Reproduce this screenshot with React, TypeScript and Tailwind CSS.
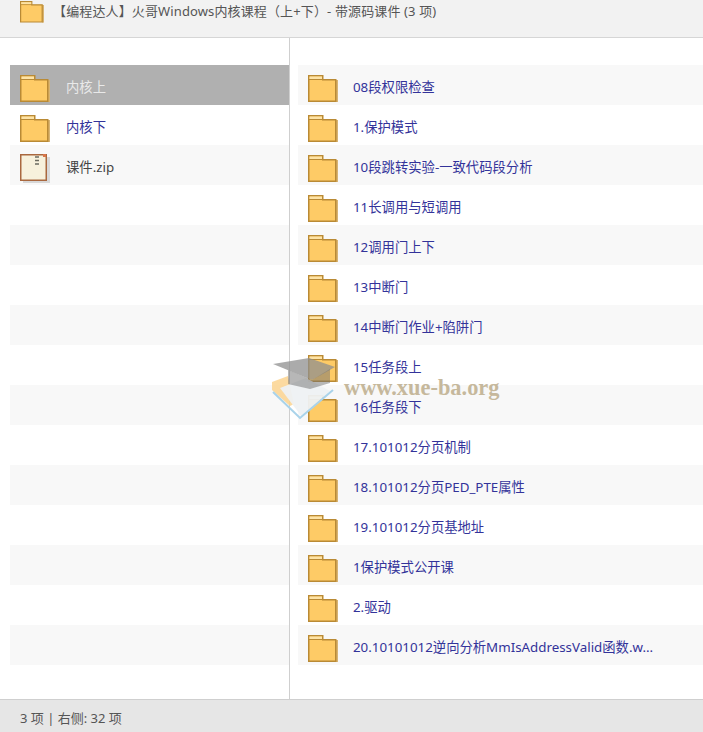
const leftRows = [
  { name: "内核上", kind: "folder" },
  { name: "内核下", kind: "folder" },
  { name: "课件.zip", kind: "zip" },
];

const rightRows = [
  "08段权限检查",
  "1.保护模式",
  "10段跳转实验-一致代码段分析",
  "11长调用与短调用",
  "12调用门上下",
  "13中断门",
  "14中断门作业+陷阱门",
  "15任务段上",
  "16任务段下",
  "17.101012分页机制",
  "18.101012分页PED_PTE属性",
  "19.101012分页基地址",
  "1保护模式公开课",
  "2.驱动",
  "20.10101012逆向分析MmIsAddressValid函数.w...",
];

function FolderIcon({ size = 30 }: { size?: number }) {
  return (
    <svg width={size} height={(size * 27) / 30} viewBox="0 0 30 27" className="flex-none">
      <rect x="27.500" y="5" width="2.500" height="22" fill="#d8b473" />
      <path d="M.75 26.250V.75h14v4h13v21.500z" fill="#fecb66" stroke="#b98a35" strokeWidth="1.500" />
      <path d="M1.500 1.500h12.500v2.500H1.500z" fill="#fde3a6" />
      <path d="M1 4.500h14" stroke="#b98a35" />
    </svg>
  );
}

function ZipIcon() {
  return (
    <svg width="30" height="29" viewBox="0 0 30 29" className="flex-none">
      <rect x="3" y="3" width="27" height="26" fill="#d8d8d8" />
      <rect x=".75" y=".75" width="25.500" height="25.500" fill="#f7f1dc" stroke="#a9683f" strokeWidth="1.500" />
      <path d="M15 3h4M15 6.500h4M15 10h4" stroke="#6b6b60" strokeWidth="1.500" />
      <rect x="23" y="0" width="3" height="3" fill="#d9764a" />
    </svg>
  );
}

function Watermark() {
  return (
    <div className="pointer-events-none absolute left-[272px] top-[358px] flex items-start">
      <svg width="72" height="62" viewBox="0 0 72 62" className="flex-none">
        <path d="M0 24l16-6 6 28-4 2L0 32z" fill="#fbd48f" opacity=".85" />
        <path d="M8 30l26-10 24 13-28 26z" fill="#eef1f3" opacity=".95" />
        <path d="M1 34l27 26 33-28" fill="none" stroke="#a9d3ea" strokeWidth="2" />
        <path d="M1 6L37 0l26 9-23 13z" fill="#8f8f8f" opacity=".75" />
        <path d="M16 12v14l22 5 20-6 0-14-18 11z" fill="#6f6f6f" opacity=".5" />
      </svg>
      <span className="-ml-0 mt-[18px] font-['Liberation_Serif',serif] text-[22.4px] font-bold leading-[24px] text-[#c6b89c]">
        www.xue-ba.org
      </span>
    </div>
  );
}

export default function App() {
  return (
    <div className="relative flex h-[732px] w-[703px] flex-col overflow-hidden bg-white font-['Noto_Sans','Noto_Sans_CJK_SC',sans-serif] text-[13.33px]">
      <header className="flex h-[38px] flex-none items-start gap-[9px] border-b border-[#d6d6d6] bg-[#f2f2f2] pl-[20px] pt-[1px]">
        <FolderIcon size={24} />
        <span className="mt-[1px] text-[13px] leading-[18px] tracking-[0.13px] text-[#555555]">
          【编程达人】火哥Windows内核课程（上+下）- 带源码课件 (3 项)
        </span>
      </header>

      <main className="flex min-h-0 flex-1">
        <div className="w-[290px] flex-none border-r border-[#cfcfcf] pl-[10px] pt-[27px]">
          {Array.from({ length: 15 }).map((_, i) => {
            const row = leftRows[i];
            const selected = i === 0;
            return (
              <div
                key={i}
                className={`flex h-[40px] items-center pt-[6px] ${
                  selected ? "bg-[#b0b0b0]" : i % 2 === 0 ? "bg-[#f8f8f8]" : ""
                }`}
              >
                {row && (
                  <>
                    <div className="ml-[10px] w-[46px] flex-none">
                      {row.kind === "folder" ? <FolderIcon /> : <ZipIcon />}
                    </div>
                    <span
                      className={
                        selected
                          ? "text-[#e9e9e9]"
                          : row.kind === "folder"
                            ? "text-[#33339a]"
                            : "text-[#444444]"
                      }
                    >
                      {row.name}
                    </span>
                  </>
                )}
              </div>
            );
          })}
        </div>

        <div className="min-w-0 flex-1 pl-[8px] pt-[27px]">
          {rightRows.map((name, i) => (
            <div
              key={name}
              className={`flex h-[40px] items-center pt-[6px] ${i % 2 === 0 ? "bg-[#f8f8f8]" : ""}`}
            >
              <div className="ml-[10px] w-[45px] flex-none">
                <FolderIcon />
              </div>
              <span className="whitespace-nowrap text-[#33339a]">{name}</span>
            </div>
          ))}
        </div>
      </main>

      <footer className="flex h-[33px] flex-none items-center border-t border-[#cfcfcf] bg-[#e6e6e6] pl-[20px] pt-[5px] text-[13px] text-[#555555]">
        3 项 | 右侧: 32 项
      </footer>

      <Watermark />
    </div>
  );
}
